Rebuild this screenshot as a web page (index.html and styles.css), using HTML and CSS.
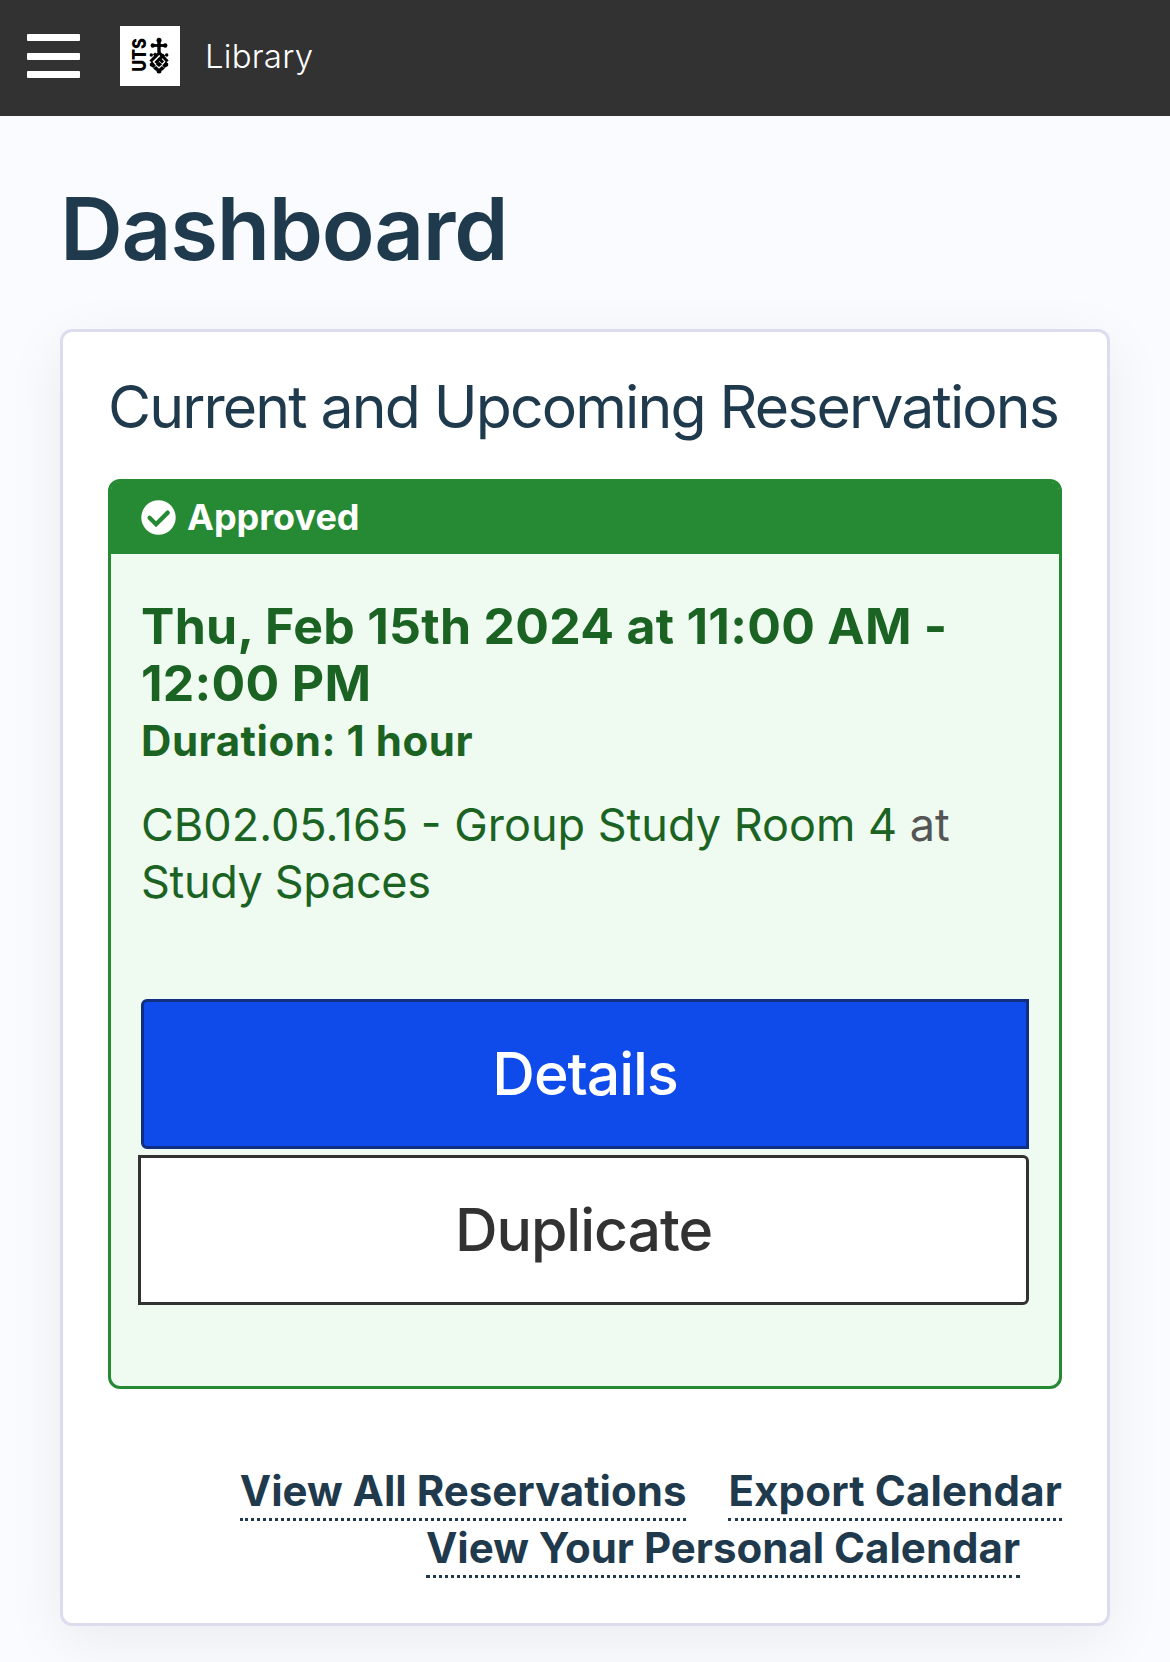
FILE: index.html
```html
<!DOCTYPE html>
<html lang="en">
<head>
    <meta charset="UTF-8">
    <meta name="viewport" content="width=device-width, initial-scale=1.0">
    <title>Dashboard - UTS Library</title>
    <link rel="stylesheet" href="styles.css">
</head>
<body>
    <header class="topbar">
        <button class="menu-toggle" aria-label="Menu">
            <span></span>
            <span></span>
            <span></span>
        </button>
        <a class="brand" href="#">
            <svg class="brand-logo" viewBox="0 0 60 60" aria-hidden="true">
                <rect width="60" height="60" fill="#fff"/>
                <text transform="translate(25.6 45.8) rotate(-90)" textLength="33.5" lengthAdjust="spacingAndGlyphs">UTS</text>
                <!-- crest: cross -->
                <g fill="#000">
                    <circle cx="39" cy="14.3" r="2.5"/>
                    <rect x="32" y="18.1" width="14" height="2.8"/>
                    <circle cx="32.8" cy="19.5" r="2.2"/>
                    <circle cx="45.2" cy="19.5" r="2.2"/>
                    <rect x="37.3" y="16" width="3.4" height="10"/>
                    <circle cx="31.3" cy="29" r="1.7"/>
                    <circle cx="46.7" cy="29" r="1.7"/>
                </g>
                <!-- crest: woven shield -->
                <g fill="none" stroke="#000" stroke-width="3.1">
                    <path d="M30.5 35.5l9-9M35.5 37l8.500-8.500"/>
                    <path d="M34 27.500l3 3M38.500 32l4.500 4.500M39 26.500l8.500 9"/>
                </g>
                <g fill="#000">
                    <path d="M29.800 37.500l2.500-2 3.500 4-2.300 2.600-3.700-2.300z"/>
                    <path d="M48.200 37.500l-2.500-2-3.500 4 2.300 2.600 3.700-2.300z"/>
                    <path d="M35.800 38.300l3.200-2.500 3.200 2.500-3.200 2.700z"/>
                    <path d="M33.200 42.600l2.900-2.600 2.700 2.600-2.600 2.400z"/>
                    <path d="M44.800 42.600l-2.900-2.600-2.700 2.600 2.600 2.400z"/>
                    <circle cx="39" cy="44.900" r="2.500"/>
                </g>
            </svg>
            <span class="brand-name">Library</span>
        </a>
    </header>
    <main>
        <h1>Dashboard</h1>
        <section class="card">
            <h2>Current and Upcoming Reservations</h2>
            <article class="reservation">
                <div class="status">
                    <svg class="status-icon" viewBox="0 0 36 36" aria-hidden="true">
                        <circle cx="18" cy="18" r="17.7" fill="#fff"/>
                        <path d="M8.800 18.200l6.700 6.700L27.500 13" fill="none" stroke="#258a33" stroke-width="4.4" stroke-linecap="round"/>
                    </svg>
                    <span>Approved</span>
                </div>
                <div class="reservation-body">
                    <h3>Thu, Feb 15th 2024 at 11:00 AM - 12:00 PM</h3>
                    <p class="duration">Duration: 1 hour</p>
                    <p class="location"><a href="#">CB02.05.165 - Group Study Room 4</a> at <a class="place" href="#">Study Spaces</a></p>
                    <div class="actions">
                        <button class="btn btn-primary">Details</button>
                        <button class="btn btn-secondary">Duplicate</button>
                    </div>
                </div>
            </article>
            <ul class="links">
                <li><a href="#">View All Reservations</a></li>
                <li><a class="export" href="#">Export Calendar</a></li>
                <li class="last"><a href="#">View Your Personal Calendar</a></li>
            </ul>
        </section>
    </main>
</body>
</html>
```
FILE: styles.css
```css
:root {
  --navy: #1f3a4d;
  --green: #258a33;
  --green-dark: #1b6323;
  --green-light: #effaf1;
  --dark: #323232;
  --blue: #0f4beb;
}
* {
  box-sizing: border-box;
}
body {
  margin: 0;
  font-family: Inter, "Liberation Sans", sans-serif;
  background: #fafbff;
  color: var(--navy);
}
h1, h2, h3, p, ul {
  margin: 0;
  padding: 0;
}
a {
  color: inherit;
  text-decoration: none;
}

/* Header */
.topbar {
  display: flex;
  align-items: center;
  height: 116px;
  padding: 0 27px 4px;
  background: var(--dark);
  color: #fff;
}
.menu-toggle {
  display: flex;
  flex-direction: column;
  gap: 11.5px;
  width: 53px;
  padding: 0;
  border: none;
  background: none;
  cursor: pointer;
}
.menu-toggle span {
  height: 7px;
  border-radius: 1px;
  background: #fff;
}
.brand {
  display: flex;
  align-items: center;
  gap: 25px;
  margin-left: 40px;
}
.brand-logo {
  width: 60px;
  height: 60px;
}
.brand-logo text {
  font-size: 19px;
  font-weight: 800;
}
.brand-name {
  font-size: 33px;
  font-weight: 300;
  letter-spacing: 0.2px;
}

/* Page */
main {
  padding: 61px 60px 36px;
}
h1 {
  margin-bottom: 48px;
  font-size: 87px;
  font-weight: 600;
  line-height: 104px;
  letter-spacing: -1.3px;
}
.card {
  padding: 40px 45px 47px;
  border: 3px solid #dddcee;
  border-radius: 12px;
  background: #fff;
  box-shadow: 0 15px 60px rgba(0, 0, 0, 0.065);
}
.card h2 {
  margin-bottom: 37px;
  font-size: 59px;
  font-weight: 400;
  line-height: 70px;
  letter-spacing: -1.88px;
  white-space: nowrap;
}

/* Reservation */
.reservation {
  border: 3px solid var(--green);
  border-radius: 12px;
  background: var(--green-light);
}
.status {
  display: flex;
  align-items: center;
  gap: 11px;
  height: 72px;
  padding: 0 30px 1px;
  background: var(--green);
  border-radius: 8px 8px 0 0;
  color: #fff;
  font-size: 36px;
  font-weight: 700;
}
.status span {
  padding-bottom: 2px;
}
.status-icon {
  width: 35px;
  height: 35px;
}
.reservation-body {
  padding: 44px 30px 81px;
  color: var(--green-dark);
  line-height: 57px;
}
.reservation-body h3 {
  font-size: 50px;
  font-weight: 700;
  letter-spacing: 0.28px;
}
.duration {
  font-size: 42px;
  font-weight: 700;
  letter-spacing: 0.55px;
}
.location {
  margin-top: 27px;
  color: #555;
  font-size: 45px;
}
.location a {
  color: var(--green-dark);
}
.location .place {
  letter-spacing: -0.35px;
}
.actions {
  display: flex;
  flex-direction: column;
  gap: 6px;
  margin-top: 89px;
}
.btn {
  height: 150px;
  padding: 0 0 2px;
  border: 3px solid;
  font-family: inherit;
  font-size: 59px;
  font-weight: 500;
  letter-spacing: -1.05px;
  cursor: pointer;
}
.btn-primary {
  border-color: #112f80;
  border-radius: 6px 0 0 6px;
  background: var(--blue);
  color: #fff;
}
.btn-secondary {
  margin-left: -3px;
  border-color: var(--dark);
  border-radius: 0 6px 6px 0;
  background: #fff;
  color: var(--dark);
}

/* Links */
.links {
  display: flex;
  flex-wrap: wrap;
  justify-content: flex-end;
  column-gap: 42px;
  margin-top: 73px;
  list-style: none;
  font-size: 42px;
  font-weight: 700;
  line-height: 57px;
}
.links .last {
  margin-right: 42px;
}
.links a {
  padding-bottom: 2px;
  border-bottom: 3px dotted var(--navy);
}
.links .export {
  letter-spacing: 0.15px;
}
```
